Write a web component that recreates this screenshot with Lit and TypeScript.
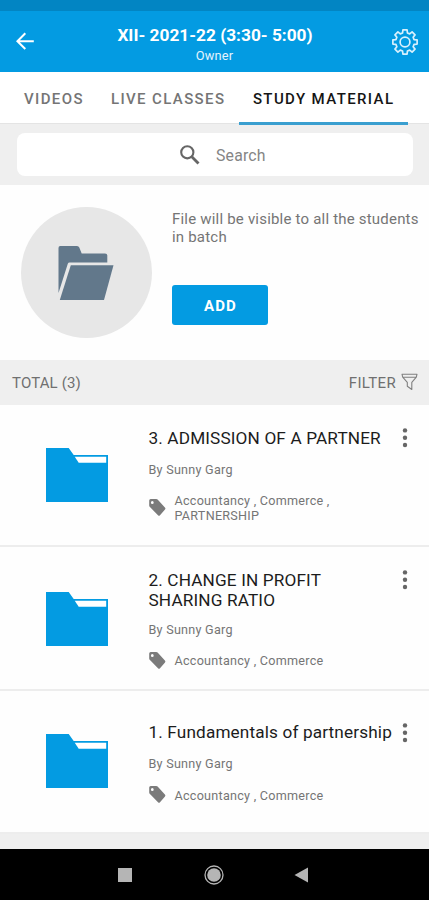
import { LitElement, html, css, svg } from "lit";
import { customElement, property } from "lit/decorators.js";

interface Material {
  title: string[];
  author: string;
  tags: string[];
  layout: string;
}

const materials: Material[] = [
  {
    title: ["3. ADMISSION OF A PARTNER"],
    author: "By Sunny Garg",
    tags: ["Accountancy , Commerce ,", "PARTNERSHIP"],
    layout: "tall-tags",
  },
  {
    title: ["2. CHANGE IN PROFIT", "SHARING RATIO"],
    author: "By Sunny Garg",
    tags: ["Accountancy , Commerce"],
    layout: "tall-title",
  },
  {
    title: ["1. Fundamentals of partnership"],
    author: "By Sunny Garg",
    tags: ["Accountancy , Commerce"],
    layout: "short",
  },
];

/* Outline of a toothed wheel centred on (14, 14). */
function gearPath(): string {
  const teeth = 8;
  const points: string[] = [];
  const step = (Math.PI * 2) / teeth;
  const corners: [number, number][] = [
    [-0.26, 9.4],
    [-0.17, 12.3],
    [0.17, 12.3],
    [0.26, 9.4],
  ];
  for (let i = 0; i < teeth; i++) {
    for (const [turn, radius] of corners) {
      const a = i * step + turn;
      points.push(
        `${(14 + radius * Math.sin(a)).toFixed(2)} ${(14 - radius * Math.cos(a)).toFixed(2)}`
      );
    }
  }
  return `M${points.join("L")}Z`;
}

@customElement("material-row")
export class MaterialRow extends LitElement {
  @property({ attribute: false }) item!: Material;

  static styles = css`
    :host {
      display: block;
      box-sizing: border-box;
      background: #fefefe;
      border-bottom: 2px solid #ededed;
    }
    .row {
      display: grid;
      grid-template-columns: 148.5px minmax(0, 1fr) 48px;
      height: 100%;
    }
    .thumb {
      display: flex;
      align-items: center;
      padding-left: 46px;
    }
    .thumb svg,
    .tag,
    .more svg {
      display: block;
    }
    .body {
      padding-top: 22.6px;
      white-space: nowrap;
    }
    .title {
      font-size: 17.2px;
      line-height: 20.6px;
      letter-spacing: 0.14px;
      color: #1c1c1c;
    }
    .author {
      margin-top: 13.4px;
      font-size: 12.6px;
      line-height: 15px;
      letter-spacing: 0.25px;
      color: #757575;
    }
    .tags {
      display: flex;
      align-items: center;
      gap: 9px;
      margin-top: 16.5px;
      font-size: 12.6px;
      line-height: 15px;
      letter-spacing: 0.26px;
      color: #757575;
    }
    .more {
      padding-top: 23px;
      padding-left: 19.5px;
    }
    .tall-title .author {
      margin-top: 11px;
    }
    .tall-title .thumb {
      padding-top: 1px;
    }
    .short .body {
      padding-top: 31.2px;
    }
    .short .more {
      padding-top: 32px;
    }
    .short .thumb {
      padding-bottom: 1px;
    }
    .tag {
      margin: -2.5px 0 -1.5px;
    }
  `;

  render() {
    const { title, author, tags, layout } = this.item;
    return html`<div class="row ${layout}">
      <div class="thumb">
        <svg width="62" height="54" viewBox="0 0 62 54">
          <path fill="#039be2" d="M0 0H22.7L27.7 7H62V54H0Z" />
          <path fill="#fff" d="M28.7 8.7H60.2V14.7H32.7Z" />
        </svg>
      </div>
      <div class="body">
        <div class="title">${title.map((t) => html`<div>${t}</div>`)}</div>
        <div class="author">${author}</div>
        <div class="tags">
          <svg class="tag" width="17" height="19" viewBox="0 0 17 19">
            <path
              fill="#7b7b7b"
              fill-rule="evenodd"
              d="M1.7 1H7.3Q8 1 8.6 1.6L15.9 9.4Q16.9 10.5 16 11.6L11 17.2Q10 18.2 9 17.2L.7 8.8Q.2 8.2.2 7.4V2.6Q.2 1 1.7 1ZM3.3 3A1.4 1.5 0 1 0 3.3 6A1.4 1.5 0 1 0 3.3 3Z"
            />
          </svg>
          <div>${tags.map((t) => html`<div>${t}</div>`)}</div>
        </div>
      </div>
      <div class="more">
        <svg width="8" height="20" viewBox="0 0 8 20" fill="#666">
          <circle cx="4" cy="2.4" r="2.2" />
          <circle cx="4" cy="9.7" r="2.2" />
          <circle cx="4" cy="17" r="2.2" />
        </svg>
      </div>
    </div>`;
  }
}

@customElement("app-root")
export class AppRoot extends LitElement {
  static styles = css`
    :host {
      display: flex;
      flex-direction: column;
      width: 429px;
      height: 900px;
      overflow: hidden;
      background: #efefef;
      font-family: Roboto, "Liberation Sans", sans-serif;
    }
    svg {
      display: block;
      flex: none;
    }
    .status {
      flex: none;
      height: 11px;
      background: #0285c3;
    }
    .header {
      flex: none;
      display: grid;
      grid-template-columns: 60px 1fr 60px;
      height: 61px;
      background: #039be2;
      color: #fff;
    }
    .back {
      padding: 21px 0 0 16px;
    }
    .gear {
      padding: 16.5px 0 0 22px;
    }
    .heading {
      padding-top: 14px;
      text-align: center;
      white-space: nowrap;
    }
    .heading h1 {
      margin: 0;
      padding-left: 1px;
      font-size: 17.3px;
      line-height: 20px;
      font-weight: 700;
    }
    .role {
      margin-top: 3px;
      font-size: 12.8px;
      line-height: 15px;
      letter-spacing: 0.2px;
      color: #e3f4fd;
    }
    .tabs {
      flex: none;
      display: flex;
      gap: 13px;
      height: 52px;
      padding-left: 10px;
      background: #fff;
      border-bottom: 1px solid #e4e4e4;
      box-sizing: border-box;
      font-size: 15px;
      font-weight: 500;
      line-height: 54px;
      letter-spacing: 1.38px;
      white-space: nowrap;
      color: #757575;
    }
    .tab {
      box-sizing: border-box;
      height: 53px;
      padding-left: 14px;
    }
    .tab.active {
      width: 169px;
      margin-left: 0.5px;
      border-bottom: 3px solid #3a9fd0;
      color: #151515;
    }
    .search-band {
      flex: none;
      height: 61px;
      padding: 9px 16px 0 17px;
      box-sizing: border-box;
    }
    .search {
      display: flex;
      align-items: center;
      gap: 16px;
      height: 43px;
      padding: 1px 0 0 163px;
      box-sizing: border-box;
      border-radius: 8px;
      background: #fff;
      font-size: 15.8px;
      letter-spacing: 0.2px;
      color: #858585;
    }
    .upload {
      flex: none;
      display: flex;
      height: 175px;
      background: #fefefe;
    }
    .disc {
      display: flex;
      align-items: center;
      justify-content: center;
      width: 131px;
      height: 131px;
      margin: 22px 20px 0 21px;
      padding-right: 2px;
      box-sizing: border-box;
      border-radius: 50%;
      background: #e7e7e7;
    }
    .note {
      margin-top: 25px;
      font-size: 15px;
      line-height: 18.3px;
      letter-spacing: 0.2px;
      color: #757575;
      white-space: nowrap;
    }
    .add {
      display: block;
      width: 96px;
      height: 40px;
      margin-top: 38.4px;
      padding: 2px 0 0 1px;
      border: 0;
      border-radius: 3px;
      background: #039be2;
      color: #fff;
      font: 700 15px/38px Roboto, "Liberation Sans", sans-serif;
      letter-spacing: 1.1px;
    }
    .summary {
      flex: none;
      display: flex;
      align-items: center;
      justify-content: space-between;
      height: 45px;
      padding: 0 11px 0 12px;
      box-sizing: border-box;
      font-size: 15px;
      letter-spacing: 0.15px;
      color: #707070;
    }
    .filter {
      display: flex;
      align-items: center;
      gap: 5px;
      letter-spacing: 0.35px;
    }
    .filter svg {
      margin-top: -2px;
    }
    .r0 {
      flex: none;
      height: 142px;
    }
    .r1 {
      flex: none;
      height: 144px;
    }
    .r2 {
      flex: none;
      height: 143px;
    }
    .nav {
      flex: none;
      display: flex;
      align-items: center;
      height: 51px;
      margin-top: auto;
      padding-left: 118px;
      box-sizing: border-box;
      background: #000;
    }
    .nav .home {
      margin-left: 72px;
    }
    .nav .prev {
      margin-left: 70px;
    }
  `;

  render() {
    return html`
      <div class="status"></div>
      <header class="header">
        <div class="back">
          <svg width="18" height="18" viewBox="0 0 18 18">
            <path d="M17.8 9.3H1.6M9.3 1.2L1.4 9.3L9.3 17" fill="none" stroke="#fff" stroke-width="2" />
          </svg>
        </div>
        <div class="heading">
          <h1>XII- 2021-22 (3:30- 5:00)</h1>
          <div class="role">Owner</div>
        </div>
        <div class="gear">
          <svg width="28" height="28" viewBox="0 0 28 28" fill="none" stroke="#d8f0fd" stroke-width="1.7" stroke-linejoin="round">
            ${svg`<path d=${gearPath()} />`}
            <circle cx="14" cy="14" r="4.9" />
          </svg>
        </div>
      </header>
      <nav class="tabs">
        <div class="tab">VIDEOS</div>
        <div class="tab">LIVE CLASSES</div>
        <div class="tab active">STUDY MATERIAL</div>
      </nav>
      <div class="search-band">
        <div class="search">
          <svg width="20" height="20" viewBox="0 0 20 20" fill="none" stroke="#666">
            <circle cx="7.3" cy="7.3" r="6.1" stroke-width="2.1" />
            <path d="M11.8 11.8L18.5 18.5" stroke-width="2.8" />
          </svg>
          <span>Search</span>
        </div>
      </div>
      <section class="upload">
        <div class="disc">
          <svg width="56" height="56" viewBox="0 0 56 56" fill="#62788b">
            <path d="M2.2 1H19Q20.7 1 21.3 2.6L23.7 8.4H47Q49.3 8.4 49.3 10.4V17.5H11.5Q10.3 17.5 9.8 18.8L.5 48V3Q.5 1 2.2 1Z" />
            <path d="M12.8 20.3H55.5L46 55H1.8Z" />
          </svg>
        </div>
        <div>
          <div class="note">File will be visible to all the students<br />in batch</div>
          <button class="add">ADD</button>
        </div>
      </section>
      <div class="summary">
        <span>TOTAL (3)</span>
        <span class="filter">
          FILTER
          <svg width="17" height="18" viewBox="0 0 17 18">
            <path
              d="M1 1.2H16L15.3 4.2L10.8 9.3V16.5L6.3 13.3V9.3L1.7 4.2ZM1.7 4.2H15.3"
              fill="none"
              stroke="#808080"
              stroke-width="1.1"
              stroke-linejoin="round"
            />
          </svg>
        </span>
      </div>
      ${materials.map(
        (item, i) => html`<material-row class="r${i}" .item=${item}></material-row>`
      )}
      <footer class="nav">
        <svg width="14" height="14" viewBox="0 0 14 14"><rect width="14" height="14" fill="#b5b5b5" /></svg>
        <svg class="home" width="20" height="20" viewBox="0 0 20 20">
          <circle cx="10" cy="10" r="9" fill="none" stroke="#b5b5b5" stroke-width="1.3" />
          <circle cx="10" cy="10" r="6.8" fill="#b5b5b5" />
        </svg>
        <svg class="prev" width="14" height="16" viewBox="0 0 14 16"><path d="M0.5 8L14 .5V15.5Z" fill="#b5b5b5" /></svg>
      </footer>
    `;
  }
}
